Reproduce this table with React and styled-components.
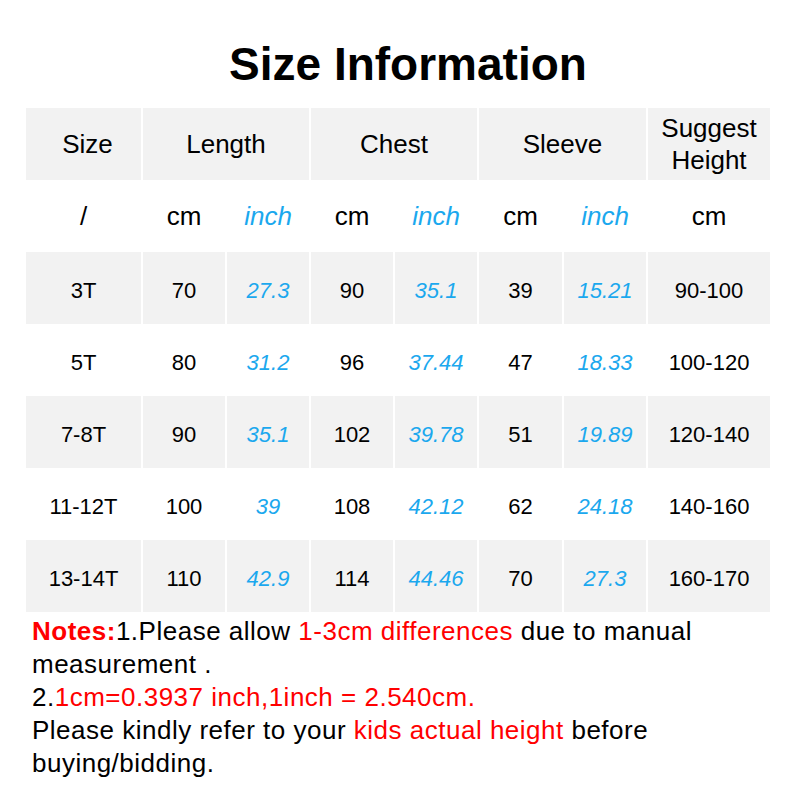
import styled, { createGlobalStyle } from 'styled-components';

const GlobalStyle = createGlobalStyle`
  html, body {
    margin: 0;
    padding: 0;
    background: #ffffff;
  }
  body {
    font-family: "Liberation Sans", Arial, sans-serif;
    color: #000;
  }
`;

const rows = [
  { size: '3T', len: '70', lenIn: '27.3', chest: '90', chestIn: '35.1', sleeve: '39', sleeveIn: '15.21', height: '90-100' },
  { size: '5T', len: '80', lenIn: '31.2', chest: '96', chestIn: '37.44', sleeve: '47', sleeveIn: '18.33', height: '100-120' },
  { size: '7-8T', len: '90', lenIn: '35.1', chest: '102', chestIn: '39.78', sleeve: '51', sleeveIn: '19.89', height: '120-140' },
  { size: '11-12T', len: '100', lenIn: '39', chest: '108', chestIn: '42.12', sleeve: '62', sleeveIn: '24.18', height: '140-160' },
  { size: '13-14T', len: '110', lenIn: '42.9', chest: '114', chestIn: '44.46', sleeve: '70', sleeveIn: '27.3', height: '160-170' },
];

export default function App() {
  return (
    <Page>
      <GlobalStyle />
      <Title>Size Information</Title>
      <Table>
        <Cell $shade $nudge>Size</Cell>
        <Cell $shade $span={2}>Length</Cell>
        <Cell $shade $span={2}>Chest</Cell>
        <Cell $shade $span={2}>Sleeve</Cell>
        <Cell $shade>Suggest<br />Height</Cell>

        <Cell>/</Cell>
        <Cell>cm</Cell>
        <Cell $inch>inch</Cell>
        <Cell>cm</Cell>
        <Cell $inch>inch</Cell>
        <Cell>cm</Cell>
        <Cell $inch>inch</Cell>
        <Cell>cm</Cell>

        {rows.map((r, i) => {
          const shade = i % 2 === 0;
          return [
            <Cell key={`${i}a`} $data $shade={shade}>{r.size}</Cell>,
            <Cell key={`${i}b`} $data $shade={shade}>{r.len}</Cell>,
            <Cell key={`${i}c`} $data $inch $shade={shade}>{r.lenIn}</Cell>,
            <Cell key={`${i}d`} $data $shade={shade}>{r.chest}</Cell>,
            <Cell key={`${i}e`} $data $inch $shade={shade}>{r.chestIn}</Cell>,
            <Cell key={`${i}f`} $data $shade={shade}>{r.sleeve}</Cell>,
            <Cell key={`${i}g`} $data $inch $shade={shade}>{r.sleeveIn}</Cell>,
            <Cell key={`${i}h`} $data $shade={shade}>{r.height}</Cell>,
          ];
        })}
      </Table>
      <Notes>
        <Red $bold>Notes:</Red>1.Please allow <Red>1-3cm differences</Red> due to manual<br />
        measurement .<br />
        2.<Red>1cm=0.3937 inch,1inch = 2.540cm.</Red><br />
        Please kindly refer to your <Red>kids actual height</Red> before<br />
        buying/bidding.
      </Notes>
    </Page>
  );
}

const Page = styled.div`
  width: 800px;
  height: 800px;
  box-sizing: border-box;
  padding: 38px 30px 0 26px;
  display: flex;
  flex-direction: column;
`;

const Title = styled.h1`
  margin: 0;
  height: 70px;
  text-align: center;
  font-size: 46px;
  line-height: 52px;
  font-weight: bold;
  padding-left: 20px;
`;

const Table = styled.div`
  display: grid;
  width: 744px;
  grid-template-columns: 115px 82px 82px 82px 82px 83px 82px 122px;
  grid-auto-rows: 72px;
  column-gap: 2px;
`;

const Cell = styled.div`
  grid-column: span ${p => p.$span || 1};
  display: flex;
  align-items: center;
  justify-content: center;
  text-align: center;
  box-sizing: border-box;
  padding-top: ${p => (p.$data ? '5px' : '0')};
  padding-left: ${p => (p.$nudge ? '8px' : '0')};
  background: ${p => (p.$shade ? '#f2f2f2' : '#ffffff')};
  color: ${p => (p.$inch ? '#1ba8ee' : '#000')};
  font-style: ${p => (p.$inch ? 'italic' : 'normal')};
  font-size: ${p => (p.$data ? '22px' : '26px')};
  line-height: 32px;
`;

const Notes = styled.p`
  margin: 3px 0 0 6px;
  font-size: 26px;
  letter-spacing: 0.5px;
  line-height: 33px;
`;

const Red = styled.span`
  color: #ff0000;
  font-weight: ${p => (p.$bold ? 'bold' : 'normal')};
`;
